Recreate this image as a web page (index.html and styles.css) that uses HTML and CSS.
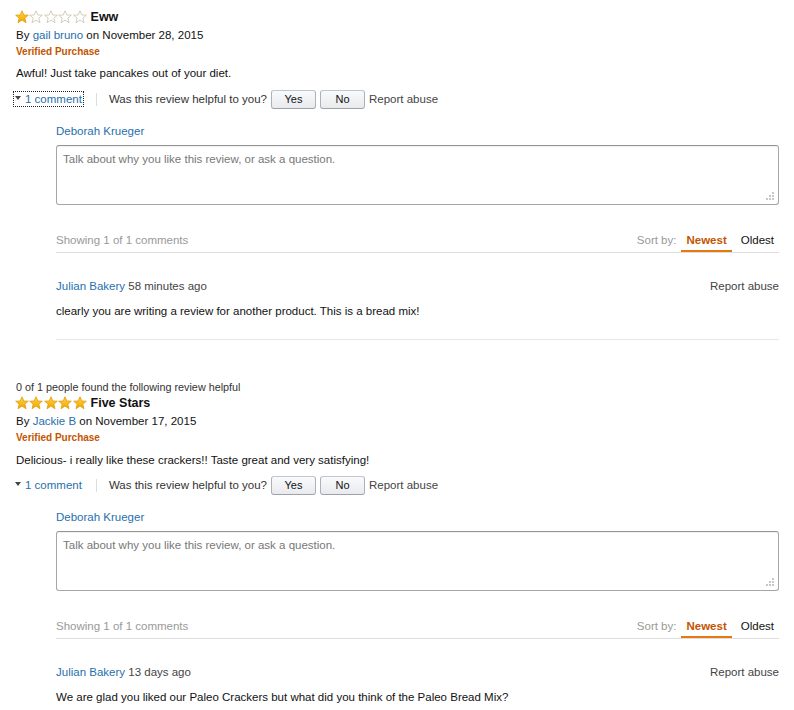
FILE: index.html
```html
<!DOCTYPE html>
<html>
<head>
<meta charset="utf-8">
<link rel="stylesheet" href="styles.css">
</head>
<body>
<svg width="0" height="0" class="defs">
  <defs>
    <linearGradient id="gold" x1="0" y1="0" x2="0" y2="1">
      <stop offset="0" stop-color="#ffd54a"/>
      <stop offset="1" stop-color="#f0a500"/>
    </linearGradient>
    <symbol id="star" viewBox="0 0 14 14">
      <polygon points="7,0.8 8.8,5 13.3,5.2 9.8,8.1 11,12.7 7,10.1 3,12.7 4.2,8.1 0.7,5.2 5.2,5"/>
    </symbol>
  </defs>
</svg>

<div class="review">
  <div class="title-row">
    <span class="stars">
      <svg class="star full"><use href="#star"/></svg><svg class="star empty"><use href="#star"/></svg><svg class="star empty"><use href="#star"/></svg><svg class="star empty"><use href="#star"/></svg><svg class="star empty"><use href="#star"/></svg>
    </span>
    <span class="title">Eww</span>
  </div>
  <div class="byline">By <a class="link">gail bruno</a> on November 28, 2015</div>
  <div class="verified">Verified Purchase</div>
  <div class="review-text">Awful! Just take pancakes out of your diet.</div>
  <div class="actions">
    <span class="toggle focused"><span class="caret"></span><a class="link">1 comment</a></span>
    <span class="sep"></span>
    <span class="helpful">Was this review helpful to you?</span>
    <button class="btn">Yes</button>
    <button class="btn">No</button>
    <span class="report">Report abuse</span>
  </div>
  <div class="comments">
    <div class="commenter"><a class="link">Deborah Krueger</a></div>
    <div class="box">
      <textarea class="input" placeholder="Talk about why you like this review, or ask a question."></textarea>
      <svg class="grip" width="9" height="9" viewBox="0 0 9 9"><rect x="6" y="0" width="2" height="2"/><rect x="3" y="3" width="2" height="2"/><rect x="6" y="3" width="2" height="2"/><rect x="0" y="6" width="2" height="2"/><rect x="3" y="6" width="2" height="2"/><rect x="6" y="6" width="2" height="2"/></svg>
    </div>
    <div class="bar">
      <span class="showing">Showing 1 of 1 comments</span>
      <span class="sort"><span class="sort-label">Sort by:</span><span class="sort-opt active">Newest</span><span class="sort-opt">Oldest</span></span>
    </div>
    <div class="comment">
      <div class="comment-head">
        <span><a class="link">Julian Bakery</a> <span class="time">58 minutes ago</span></span>
        <span class="report">Report abuse</span>
      </div>
      <div class="comment-text">clearly you are writing a review for another product. This is a bread mix!</div>
    </div>
  </div>
</div>

<div class="review second">
  <div class="helpful-count">0 of 1 people found the following review helpful</div>
  <div class="title-row">
    <span class="stars">
      <svg class="star full"><use href="#star"/></svg><svg class="star full"><use href="#star"/></svg><svg class="star full"><use href="#star"/></svg><svg class="star full"><use href="#star"/></svg><svg class="star full"><use href="#star"/></svg>
    </span>
    <span class="title">Five Stars</span>
  </div>
  <div class="byline">By <a class="link">Jackie B</a> on November 17, 2015</div>
  <div class="verified">Verified Purchase</div>
  <div class="review-text">Delicious- i really like these crackers!! Taste great and very satisfying!</div>
  <div class="actions">
    <span class="toggle"><span class="caret"></span><a class="link">1 comment</a></span>
    <span class="sep"></span>
    <span class="helpful">Was this review helpful to you?</span>
    <button class="btn">Yes</button>
    <button class="btn">No</button>
    <span class="report">Report abuse</span>
  </div>
  <div class="comments">
    <div class="commenter"><a class="link">Deborah Krueger</a></div>
    <div class="box">
      <textarea class="input" placeholder="Talk about why you like this review, or ask a question."></textarea>
      <svg class="grip" width="9" height="9" viewBox="0 0 9 9"><rect x="6" y="0" width="2" height="2"/><rect x="3" y="3" width="2" height="2"/><rect x="6" y="3" width="2" height="2"/><rect x="0" y="6" width="2" height="2"/><rect x="3" y="6" width="2" height="2"/><rect x="6" y="6" width="2" height="2"/></svg>
    </div>
    <div class="bar">
      <span class="showing">Showing 1 of 1 comments</span>
      <span class="sort"><span class="sort-label">Sort by:</span><span class="sort-opt active">Newest</span><span class="sort-opt">Oldest</span></span>
    </div>
    <div class="comment">
      <div class="comment-head">
        <span><a class="link">Julian Bakery</a> <span class="time">13 days ago</span></span>
        <span class="report">Report abuse</span>
      </div>
      <div class="comment-text">We are glad you liked our Paleo Crackers but what did you think of the Paleo Bread Mix?</div>
    </div>
  </div>
</div>
</body>
</html>
```
FILE: styles.css
```css
html, body {
  margin: 0;
  padding: 0;
  background: #fff;
}
body {
  font-family: "Liberation Sans", Arial, sans-serif;
  font-size: 11.5px;
  color: #111;
  padding: 7px 15px 0 15px;
}
.defs {
  position: absolute;
  width: 0;
  height: 0;
}
.link {
  color: #1f70ad;
  text-decoration: none;
}
.review.second {
  margin-top: 41px;
}
.helpful-count {
  font-size: 10.8px;
  line-height: 12px;
  color: #333;
  padding-left: 1px;
}
.title-row {
  display: flex;
  align-items: center;
  height: 20px;
}
.stars {
  display: flex;
  gap: 0.4px;
  margin-right: 4px;
}
.star {
  width: 14px;
  height: 14px;
}
.star.full use {
  fill: url(#gold);
  stroke: #e39a00;
  stroke-width: 0.8;
}
.star.empty use {
  fill: #fff;
  stroke: #c9c2a8;
  stroke-width: 0.8;
}
.title {
  font-weight: bold;
  font-size: 12.5px;
  color: #111;
}
.byline {
  line-height: 16px;
  padding-left: 1px;
}
.verified {
  margin-top: 2px;
  line-height: 14px;
  font-size: 10px;
  font-weight: bold;
  color: #c45500;
  padding-left: 1px;
}
.review-text {
  margin-top: 6px;
  line-height: 16px;
  padding-left: 1px;
}
.second .review-text {
  margin-top: 7px;
}
.actions {
  margin-top: 8px;
  height: 20px;
  display: flex;
  align-items: center;
  color: #333;
}
.second .actions {
  margin-top: 7px;
}
.toggle {
  display: flex;
  align-items: center;
  height: 14px;
  padding: 0 1px;
  margin-left: -1px;
}
.toggle.focused {
  outline: 1px dotted #222;
  outline-offset: 0;
}
.caret {
  width: 0;
  height: 0;
  border-left: 3px solid transparent;
  border-right: 3px solid transparent;
  border-top: 4px solid #444;
  margin-right: 4px;
  margin-top: -2px;
}
.sep {
  width: 1px;
  height: 13px;
  background: #ddd;
  margin: 0 12px 0 13px;
}
.helpful {
  margin-right: 4px;
}
.btn {
  font-family: "Liberation Sans", Arial, sans-serif;
  font-size: 11px;
  color: #111;
  width: 45px;
  height: 19px;
  padding: 0;
  border: 1px solid #adb1b8;
  border-color: #c2c5ca #adb1b8 #9ea2a8;
  border-radius: 3px;
  background: linear-gradient(#f9fafb, #e8eaed);
  margin-right: 4px;
}
.report {
  color: #444;
}
.comments {
  margin-left: 41px;
}
.commenter {
  margin-top: 14px;
  line-height: 16px;
}
.box {
  position: relative;
  margin-top: 6px;
  height: 60px;
}
.input {
  box-sizing: border-box;
  display: block;
  width: 100%;
  height: 60px;
  margin: 0;
  padding: 7px 6px;
  border: 1px solid #a6a6a6;
  border-top-color: #949494;
  border-radius: 3px;
  box-shadow: inset 0 1px 0 rgba(0,0,0,0.05);
  font-family: "Liberation Sans", Arial, sans-serif;
  font-size: 11.5px;
  resize: none;
  outline: none;
}
.input::placeholder {
  color: #777;
}
.grip {
  position: absolute;
  right: 4px;
  bottom: 4px;
  fill: #c8c8c8;
}
.bar {
  margin-top: 23px;
  height: 24px;
  display: flex;
  justify-content: space-between;
  align-items: center;
  border-bottom: 1px solid #dedede;
}
.showing {
  color: #999;
}
.sort {
  display: flex;
  align-items: stretch;
  height: 24px;
  padding-right: 0;
}
.sort-label {
  color: #999;
  display: flex;
  align-items: center;
  margin-right: 5px;
}
.sort-opt {
  display: flex;
  align-items: center;
  padding: 0 5px;
  margin-left: 4px;
  box-sizing: border-box;
  border-bottom: 2px solid transparent;
  padding-top: 2px;
  color: #111;
}
.sort-opt.active {
  color: #c45500;
  font-weight: bold;
  border-bottom-color: #e47911;
  margin-left: 0;
}
.comment {
  padding-top: 25px;
  padding-bottom: 20px;
  border-bottom: 1px solid #e7e7e7;
}
.comment-head {
  display: flex;
  justify-content: space-between;
  line-height: 16px;
}
.time {
  color: #444;
}
.comment-text {
  margin-top: 9px;
  line-height: 16px;
}
```
